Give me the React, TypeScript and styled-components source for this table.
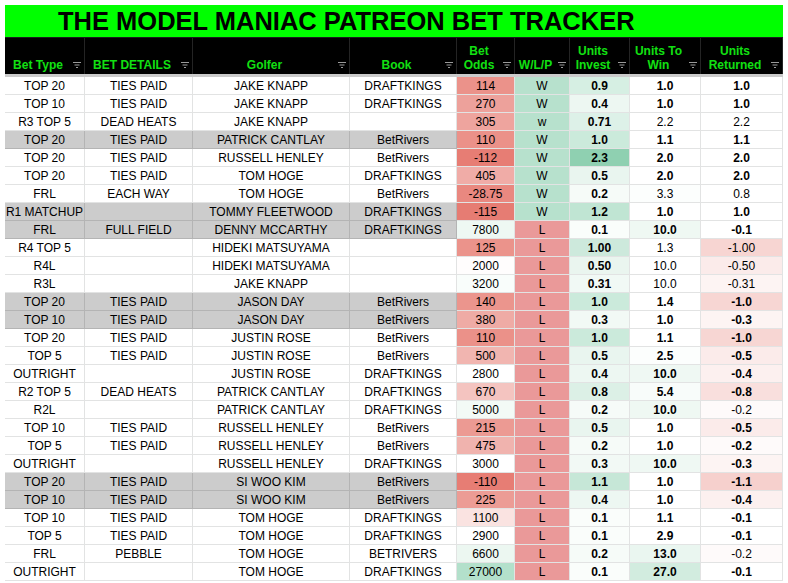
import styled, { createGlobalStyle } from 'styled-components';

const GlobalStyle = createGlobalStyle`
  body {
    margin: 0;
    background: #ffffff;
    font-family: "Liberation Sans", Arial, sans-serif;
  }
`;

const COLUMNS = '80px 108px 157px 107px 58px 55px 60px 71px 82px';

type Bet = {
  type: string;
  detail: string;
  golfer: string;
  book: string;
  odds: string;
  oddsBg: string;
  result: string;
  invest: string;
  investBg: string;
  win: string;
  winBg: string;
  ret: string;
  retBg: string;
  gray?: boolean;
  boldWin?: boolean;
  boldRet?: boolean;
};

const W = '#b7e1cd';
const L = '#ea9999';

const bets: Bet[] = [
  { type: 'TOP 20', detail: 'TIES PAID', golfer: 'JAKE KNAPP', book: 'DRAFTKINGS', odds: '114', oddsBg: '#eb928a', result: 'W', invest: '0.9', investBg: '#d6efe3', win: '1.0', winBg: '#fff', ret: '1.0', retBg: '#fff', boldWin: true, boldRet: true },
  { type: 'TOP 10', detail: 'TIES PAID', golfer: 'JAKE KNAPP', book: 'DRAFTKINGS', odds: '270', oddsBg: '#eda19b', result: 'W', invest: '0.4', investBg: '#edf7f2', win: '1.0', winBg: '#fff', ret: '1.0', retBg: '#fff', boldWin: true, boldRet: true },
  { type: 'R3 TOP 5', detail: 'DEAD HEATS', golfer: 'JAKE KNAPP', book: '', odds: '305', oddsBg: '#eea49e', result: 'w', invest: '0.71', investBg: '#ddf1e8', win: '2.2', winBg: '#fff', ret: '2.2', retBg: '#fff' },
  { type: 'TOP 20', detail: 'TIES PAID', golfer: 'PATRICK CANTLAY', book: 'BetRivers', odds: '110', oddsBg: '#eb9189', result: 'W', invest: '1.0', investBg: '#cbeadb', win: '1.1', winBg: '#fff', ret: '1.1', retBg: '#fff', gray: true, boldWin: true, boldRet: true },
  { type: 'TOP 20', detail: 'TIES PAID', golfer: 'RUSSELL HENLEY', book: 'BetRivers', odds: '-112', oddsBg: '#e77d74', result: 'W', invest: '2.3', investBg: '#8fd0b1', win: '2.0', winBg: '#fff', ret: '2.0', retBg: '#fff', boldWin: true, boldRet: true },
  { type: 'TOP 20', detail: 'TIES PAID', golfer: 'TOM HOGE', book: 'DRAFTKINGS', odds: '405', oddsBg: '#f0aca7', result: 'W', invest: '0.5', investBg: '#e9f5ef', win: '2.0', winBg: '#fff', ret: '2.0', retBg: '#fff', boldWin: true, boldRet: true },
  { type: 'FRL', detail: 'EACH WAY', golfer: 'TOM HOGE', book: 'BetRivers', odds: '-28.75', oddsBg: '#e98880', result: 'W', invest: '0.2', investBg: '#f6fbf8', win: '3.3', winBg: '#fcfefd', ret: '0.8', retBg: '#fff' },
  { type: 'R1 MATCHUP', detail: '', golfer: 'TOMMY FLEETWOOD', book: 'DRAFTKINGS', odds: '-115', oddsBg: '#e67c73', result: 'W', invest: '1.2', investBg: '#c0e5d3', win: '1.0', winBg: '#fff', ret: '1.0', retBg: '#fff', gray: true, boldWin: true, boldRet: true },
  { type: 'FRL', detail: 'FULL FIELD', golfer: 'DENNY MCCARTHY', book: 'DRAFTKINGS', odds: '7800', oddsBg: '#eef8f3', result: 'L', invest: '0.1', investBg: '#fafdfb', win: '10.0', winBg: '#eff8f3', ret: '-0.1', retBg: '#fff', gray: true, boldWin: true, boldRet: true },
  { type: 'R4 TOP 5', detail: '', golfer: 'HIDEKI MATSUYAMA', book: '', odds: '125', oddsBg: '#eb938b', result: 'L', invest: '1.00', investBg: '#cde9dc', win: '1.3', winBg: '#fff', ret: '-1.00', retBg: '#f7d5d2' },
  { type: 'R4L', detail: '', golfer: 'HIDEKI MATSUYAMA', book: '', odds: '2000', oddsBg: '#fffdfd', result: 'L', invest: '0.50', investBg: '#eaf5ef', win: '10.0', winBg: '#fff', ret: '-0.50', retBg: '#fbebea' },
  { type: 'R3L', detail: '', golfer: 'JAKE KNAPP', book: '', odds: '3200', oddsBg: '#f9fdfb', result: 'L', invest: '0.31', investBg: '#f1f9f5', win: '10.0', winBg: '#fff', ret: '-0.31', retBg: '#fdf4f3' },
  { type: 'TOP 20', detail: 'TIES PAID', golfer: 'JASON DAY', book: 'BetRivers', odds: '140', oddsBg: '#eb958d', result: 'L', invest: '1.0', investBg: '#cbeadb', win: '1.4', winBg: '#fff', ret: '-1.0', retBg: '#f7d6d3', gray: true, boldWin: true, boldRet: true },
  { type: 'TOP 10', detail: 'TIES PAID', golfer: 'JASON DAY', book: 'BetRivers', odds: '380', oddsBg: '#efaba5', result: 'L', invest: '0.3', investBg: '#f2f9f5', win: '1.0', winBg: '#fff', ret: '-0.3', retBg: '#fdf4f3', gray: true, boldWin: true, boldRet: true },
  { type: 'TOP 20', detail: 'TIES PAID', golfer: 'JUSTIN ROSE', book: 'BetRivers', odds: '110', oddsBg: '#eb9189', result: 'L', invest: '1.0', investBg: '#cbeadb', win: '1.1', winBg: '#fff', ret: '-1.0', retBg: '#f7d6d3', boldWin: true, boldRet: true },
  { type: 'TOP 5', detail: 'TIES PAID', golfer: 'JUSTIN ROSE', book: 'BetRivers', odds: '500', oddsBg: '#f1b5b0', result: 'L', invest: '0.5', investBg: '#e9f5ef', win: '2.5', winBg: '#fcfefd', ret: '-0.5', retBg: '#fbebea', boldWin: true, boldRet: true },
  { type: 'OUTRIGHT', detail: '', golfer: 'JUSTIN ROSE', book: 'DRAFTKINGS', odds: '2800', oddsBg: '#ffffff', result: 'L', invest: '0.4', investBg: '#edf7f2', win: '10.0', winBg: '#eff8f3', ret: '-0.4', retBg: '#fcf0ef', boldWin: true, boldRet: true },
  { type: 'R2 TOP 5', detail: 'DEAD HEATS', golfer: 'PATRICK CANTLAY', book: 'DRAFTKINGS', odds: '670', oddsBg: '#f4c4c0', result: 'L', invest: '0.8', investBg: '#dcf0e6', win: '5.4', winBg: '#f8fcfa', ret: '-0.8', retBg: '#f9dfdd', boldWin: true, boldRet: true },
  { type: 'R2L', detail: '', golfer: 'PATRICK CANTLAY', book: 'DRAFTKINGS', odds: '5000', oddsBg: '#f3faf6', result: 'L', invest: '0.2', investBg: '#f6fbf8', win: '10.0', winBg: '#eff8f3', ret: '-0.2', retBg: '#fefafa', boldWin: true },
  { type: 'TOP 10', detail: 'TIES PAID', golfer: 'RUSSELL HENLEY', book: 'BetRivers', odds: '215', oddsBg: '#ec9a93', result: 'L', invest: '0.5', investBg: '#e9f5ef', win: '1.0', winBg: '#fff', ret: '-0.5', retBg: '#fbebea', boldWin: true, boldRet: true },
  { type: 'TOP 5', detail: 'TIES PAID', golfer: 'RUSSELL HENLEY', book: 'BetRivers', odds: '475', oddsBg: '#f0b3ae', result: 'L', invest: '0.2', investBg: '#f6fbf8', win: '1.0', winBg: '#fff', ret: '-0.2', retBg: '#fefafa', boldWin: true, boldRet: true },
  { type: 'OUTRIGHT', detail: '', golfer: 'RUSSELL HENLEY', book: 'DRAFTKINGS', odds: '3000', oddsBg: '#ffffff', result: 'L', invest: '0.3', investBg: '#f2f9f5', win: '10.0', winBg: '#eff8f3', ret: '-0.3', retBg: '#fdf4f3', boldWin: true, boldRet: true },
  { type: 'TOP 20', detail: 'TIES PAID', golfer: 'SI WOO KIM', book: 'BetRivers', odds: '-110', oddsBg: '#e77d74', result: 'L', invest: '1.1', investBg: '#c6e7d7', win: '1.0', winBg: '#fff', ret: '-1.1', retBg: '#f6d0cd', gray: true, boldWin: true, boldRet: true },
  { type: 'TOP 10', detail: 'TIES PAID', golfer: 'SI WOO KIM', book: 'BetRivers', odds: '225', oddsBg: '#ec9c95', result: 'L', invest: '0.4', investBg: '#edf7f2', win: '1.0', winBg: '#fff', ret: '-0.4', retBg: '#fcf0ef', gray: true, boldWin: true, boldRet: true },
  { type: 'TOP 10', detail: 'TIES PAID', golfer: 'TOM HOGE', book: 'DRAFTKINGS', odds: '1100', oddsBg: '#fae3e1', result: 'L', invest: '0.1', investBg: '#fafdfb', win: '1.1', winBg: '#fff', ret: '-0.1', retBg: '#fff', boldWin: true, boldRet: true },
  { type: 'TOP 5', detail: 'TIES PAID', golfer: 'TOM HOGE', book: 'DRAFTKINGS', odds: '2900', oddsBg: '#ffffff', result: 'L', invest: '0.1', investBg: '#fafdfb', win: '2.9', winBg: '#fff', ret: '-0.1', retBg: '#fff', boldWin: true, boldRet: true },
  { type: 'FRL', detail: 'PEBBLE', golfer: 'TOM HOGE', book: 'BETRIVERS', odds: '6600', oddsBg: '#ecf7f1', result: 'L', invest: '0.2', investBg: '#f6fbf8', win: '13.0', winBg: '#eaf6f0', ret: '-0.2', retBg: '#fefafa', boldWin: true },
  { type: 'OUTRIGHT', detail: '', golfer: 'TOM HOGE', book: 'DRAFTKINGS', odds: '27000', oddsBg: '#b3e0cb', result: 'L', invest: '0.1', investBg: '#fafdfb', win: '27.0', winBg: '#d2ecdf', ret: '-0.1', retBg: '#fff', boldWin: true, boldRet: true },
];

const headers: string[][] = [
  ['Bet Type'],
  ['BET DETAILS'],
  ['Golfer'],
  ['Book'],
  ['Bet', 'Odds'],
  ['W/L/P'],
  ['Units', 'Invest'],
  ['Units To', 'Win'],
  ['Units', 'Returned'],
];

const Sheet = styled.div`
  width: 778px;
  padding: 5px 5px 0;
`;

const TitleBar = styled.h1`
  margin: 0;
  height: 32px;
  padding-left: 53px;
  display: flex;
  align-items: center;
  background: #00ff00;
  border-bottom: 1px solid #1c1c1c;
  color: #000;
  font-size: 25.5px;
  font-weight: 700;
`;

const HeaderRow = styled.div`
  display: grid;
  grid-template-columns: ${COLUMNS};
  height: 36px;
  background: #000;
  border-bottom: 3px solid #cbcbcb;
`;

const HeaderCell = styled.div`
  display: flex;
  align-items: flex-end;
  border-right: 1px solid #242424;
  padding-bottom: 2px;
`;

const HeaderLabel = styled.div`
  flex: 1;
  text-align: center;
  color: #12e012;
  font-size: 12px;
  font-weight: 700;
  line-height: 14px;
`;

const FilterIcon = styled.svg`
  flex: none;
  margin: 0 3px 4px 2px;
`;

const Row = styled.div`
  display: grid;
  grid-template-columns: ${COLUMNS};
  height: 18px;
`;

const Cell = styled.div<{ $bg?: string; $bold?: boolean; $gray?: boolean }>`
  display: flex;
  align-items: center;
  justify-content: center;
  overflow: hidden;
  white-space: nowrap;
  background: ${({ $gray, $bg }) => ($gray ? '#cccccc' : $bg ?? '#ffffff')};
  border-right: 1px solid ${({ $gray }) => ($gray ? '#b4b4b4' : '#e2e3e3')};
  border-bottom: 1px solid ${({ $gray }) => ($gray ? '#b4b4b4' : '#e2e3e3')};
  color: #000;
  font-size: 12px;
  font-weight: ${({ $bold }) => ($bold ? 700 : 400)};
`;

const Filter = () => (
  <FilterIcon width="8" height="6" viewBox="0 0 8 6" aria-hidden="true">
    <path d="M0 0.5h8M1.5 3h5M3 5.5h2" stroke="#9a9a9a" strokeWidth="1" />
  </FilterIcon>
);

export default function App() {
  return (
    <>
      <GlobalStyle />
      <Sheet>
        <TitleBar>THE MODEL MANIAC PATREON BET TRACKER</TitleBar>
        <HeaderRow>
          {headers.map((lines) => (
            <HeaderCell key={lines.join(' ')}>
              <HeaderLabel>
                {lines.map((line) => (
                  <div key={line}>{line}</div>
                ))}
              </HeaderLabel>
              <Filter />
            </HeaderCell>
          ))}
        </HeaderRow>
        {bets.map((b, i) => (
          <Row key={i}>
            <Cell $gray={b.gray}>{b.type}</Cell>
            <Cell $gray={b.gray}>{b.detail}</Cell>
            <Cell $gray={b.gray}>{b.golfer}</Cell>
            <Cell $gray={b.gray}>{b.book}</Cell>
            <Cell $bg={b.oddsBg}>{b.odds}</Cell>
            <Cell $bg={b.result === 'L' ? L : W}>{b.result}</Cell>
            <Cell $bg={b.investBg} $bold>
              {b.invest}
            </Cell>
            <Cell $bg={b.winBg} $bold={b.boldWin}>
              {b.win}
            </Cell>
            <Cell $bg={b.retBg} $bold={b.boldRet}>
              {b.ret}
            </Cell>
          </Row>
        ))}
      </Sheet>
    </>
  );
}
